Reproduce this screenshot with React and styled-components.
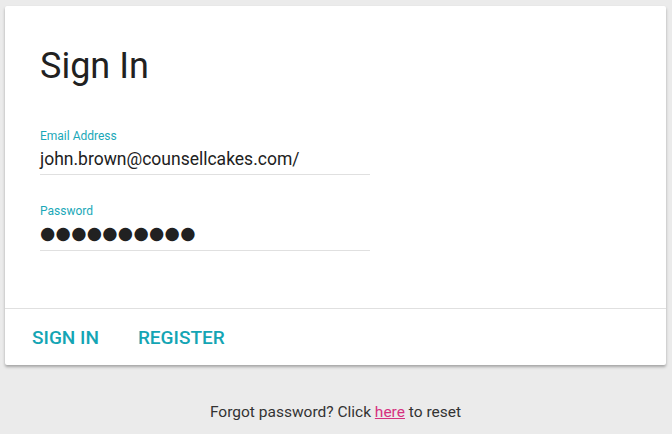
import React from "react";
import styled, { createGlobalStyle } from "styled-components";

const GlobalStyle = createGlobalStyle`
  html, body {
    margin: 0;
    padding: 0;
    background: #ebebeb;
    font-family: Roboto, "Liberation Sans", sans-serif;
  }
`;

const Page = styled.div`
  display: flex;
  flex-direction: column;
  padding: 6px 6px 0 5px;
`;

const Card = styled.div`
  background: #fff;
  border-radius: 2px;
  box-shadow: 0 2px 3px rgba(0, 0, 0, 0.3);
  display: flex;
  flex-direction: column;
`;

const Body = styled.div`
  padding: 38px 35px 0 35px;
  height: 303px;
  box-sizing: border-box;
  border-bottom: 1px solid #e0e0e0;
`;

const Title = styled.h1`
  margin: 0 0 41px 0;
  font-size: 36px;
  font-weight: 400;
  color: #212121;
  line-height: 44px;
`;

const Field = styled.div`
  width: 330px;
  border-bottom: 1px solid #e0e0e0;
  margin-bottom: 29px;
  padding-bottom: 3px;
`;

const Label = styled.div`
  font-size: 12px;
  color: #1aa8b8;
  line-height: 14px;
`;

const Value = styled.div`
  font-size: 17.5px;
  color: #212121;
  line-height: 24px;
  margin-top: 4px;
`;

const Dots = styled(Value)`
  font-family: "DejaVu Sans", sans-serif;
  font-size: 17.5px;
  letter-spacing: 0.3px;
  line-height: 22px;
  padding-bottom: 3px;
`;

const Actions = styled.div`
  display: flex;
  align-items: center;
  height: 56px;
  padding-left: 27px;
  gap: 39px;
`;

const ActionButton = styled.button`
  border: none;
  background: none;
  padding: 0;
  font-family: inherit;
  font-size: 19px;
  font-weight: 500;
  color: #14a5b4;
  text-transform: uppercase;
  cursor: pointer;
`;

const Footer = styled.p`
  margin: 38px 0 0 0;
  text-align: center;
  font-size: 15.5px;
  color: #333;
`;

const Link = styled.a`
  color: #d6317f;
  text-decoration: underline;
`;

export default function App() {
  return (
    <>
      <GlobalStyle />
      <Page>
        <Card>
          <Body>
            <Title>Sign In</Title>
            <Field>
              <Label>Email Address</Label>
              <Value>john.brown@counsellcakes.com/</Value>
            </Field>
            <Field>
              <Label>Password</Label>
              <Dots>●●●●●●●●●●</Dots>
            </Field>
          </Body>
          <Actions>
            <ActionButton>Sign In</ActionButton>
            <ActionButton>Register</ActionButton>
          </Actions>
        </Card>
        <Footer>
          Forgot password? Click <Link href="#">here</Link> to reset
        </Footer>
      </Page>
    </>
  );
}
